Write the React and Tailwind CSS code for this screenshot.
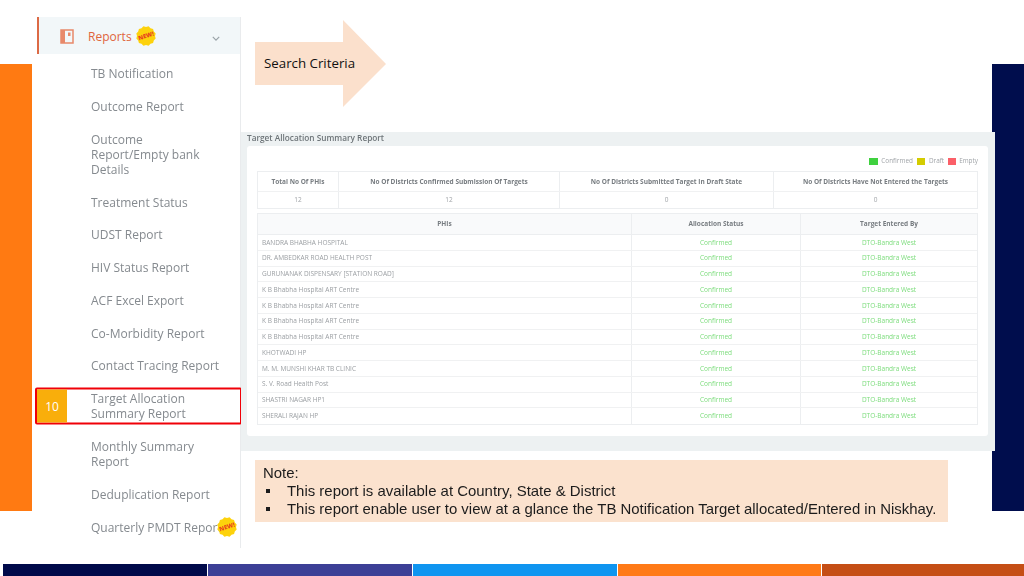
const sideFont = { fontFamily: '"Open Sans", sans-serif' };

function NewBadge({ className }) {
  const pts = [];
  for (let i = 0; i < 24; i++) {
    const r = i % 2 ? 10 : 9;
    const a = (i * Math.PI) / 12;
    pts.push(`${10 + r * Math.cos(a)},${10 + r * Math.sin(a)}`);
  }
  return (
    <span className={`absolute w-[20px] h-[20px] ${className}`}>
      <svg viewBox="0 0 20 20" className="absolute inset-0 w-full h-full">
        <polygon points={pts.join(" ")} fill="#fdd20c" />
      </svg>
      <span className="absolute inset-0 flex items-center justify-center text-[6px] font-extrabold text-[#e8451e] -rotate-[18deg] leading-none">
        NEW!
      </span>
    </span>
  );
}

const items = [
  ["TB Notification"],
  ["Outcome Report"],
  ["Outcome", "Report/Empty bank", "Details"],
  ["Treatment Status"],
  ["UDST Report"],
  ["HIV Status Report"],
  ["ACF Excel Export"],
  ["Co-Morbidity Report"],
  ["Contact Tracing Report"],
];

const rows = [
  "BANDRA BHABHA HOSPITAL",
  "DR. AMBEDKAR ROAD HEALTH POST",
  "GURUNANAK DISPENSARY [STATION ROAD]",
  "K B Bhabha Hospital ART Centre",
  "K B Bhabha Hospital ART Centre",
  "K B Bhabha Hospital ART Centre",
  "K B Bhabha Hospital ART Centre",
  "KHOTWADI HP",
  "M. M. MUNSHI KHAR TB CLINIC",
  "S. V. Road Health Post",
  "SHASTRI NAGAR HP1",
  "SHERALI RAJAN HP",
];

function Item({ lines, children }) {
  return (
    <div className="relative pl-[54px] py-[8.9px] text-[12px] leading-[15px] text-[#858a8f] whitespace-nowrap">
      {lines.map((l) => (
        <div key={l}>{l}</div>
      ))}
      {children}
    </div>
  );
}

function Sidebar() {
  return (
    <div className="w-[204px] h-[531px] mt-[17px] ml-[5px] shrink-0 border-r border-[#e9ebed] blur-[0.35px]" style={sideFont}>
      <div className="h-[37px] flex items-center bg-[#f2f7f9] border-l-2 border-[#dc6a45] pl-[21px] relative">
        <svg viewBox="0 0 14 15" className="w-[14px] h-[15px] shrink-0 mt-[1px]">
          <path d="M1 1h12v13H1z" fill="none" stroke="#e8896a" strokeWidth="1.5" />
          <path d="M1 1h4v13H1z" fill="#e8896a" />
          <path d="M8 3.5h2.5v3.5H8z" fill="#e8896a" />
        </svg>
        <span className="ml-[14px] mt-[3px] text-[12px] text-[#e0653c]">Reports</span>
        <NewBadge className="left-[97px] top-[9px]" />
        <svg viewBox="0 0 10 6" className="absolute left-[173px] top-[19px] w-[8px] h-[5px]">
          <path d="M1 1l4 4 4-4" fill="none" stroke="#9aa3a8" strokeWidth="1.5" />
        </svg>
      </div>
      <div className="mt-[3.3px]">
        {items.map((t) => (
          <Item key={t[0] + t.length} lines={t} />
        ))}
        <Item lines={["Target Allocation", "Summary Report"]}>
          <div className="absolute -left-[2px] top-1/2 -translate-y-1/2 w-[207px] h-[37px] border-[2.5px] border-[#f00008] rounded-[2px]">
            <div className="w-[30px] h-full bg-[#f9ae0b] text-white text-[12px] flex items-center justify-center">10</div>
          </div>
        </Item>
        <Item lines={["Monthly Summary", "Report"]} />
        <Item lines={["Deduplication Report"]} />
        <Item lines={["Quarterly PMDT Report"]}>
          <NewBadge className="left-[180px] top-[6px]" />
        </Item>
      </div>
    </div>
  );
}

function Arrow() {
  return (
    <div className="relative ml-[14px] mt-[20px] w-[131px] h-[87px] flex items-center pl-[9px]">
      <svg viewBox="0 0 131 87" className="absolute inset-0 w-full h-full">
        <polygon points="0,22 88,22 88,0 131,44 88,87 88,65 0,65" fill="#fbe0cc" />
      </svg>
      <span className="relative text-[13.3px] text-[#111] whitespace-nowrap" style={sideFont}>Search Criteria</span>
    </div>
  );
}

function Report() {
  const cell = "border-r border-[#eceef0] flex items-center justify-center";
  return (
    <div className="relative z-10 mt-[25px] w-[754px] h-[319px] bg-[#edf1f2] pl-[6px] pr-[7px] pb-[15px] flex flex-col blur-[0.7px] text-[#777]" style={sideFont}>
      <div className="h-[14px] shrink-0 text-[8.25px] font-semibold leading-[11px] text-[#6d7478] whitespace-nowrap">Target Allocation Summary Report</div>
      <div className="flex-1 bg-white rounded-[3px] px-[10px] pt-[8px] flex flex-col">
        <div className="h-[14px] mb-[3px] flex items-center justify-end text-[6.4px] text-[#a0a4a8] shrink-0">
          <span className="w-[9px] h-[7px] bg-[#3fd13f] mr-[3px]" /><span className="mr-[4px]">Confirmed</span>
          <span className="w-[8px] h-[7px] bg-[#d4cc00] mr-[4px]" /><span className="mr-[4px]">Draft</span>
          <span className="w-[8px] h-[7px] bg-[#fb5f68] mr-[3px]" /><span>Empty</span>
        </div>
        <div className="shrink-0 border border-[#eceef0] text-[6.5px]">
          <div className="grid grid-cols-[81px_221px_214px_1fr] h-[20px] font-bold text-[#777c80] border-b border-[#f0f1f2]">
            <div className={cell}>Total No Of PHIs</div>
            <div className={cell}>No Of Districts Confirmed Submission Of Targets</div>
            <div className={cell}>No Of Districts Submitted Target In Draft State</div>
            <div className="flex items-center justify-center">No Of Districts Have Not Entered the Targets</div>
          </div>
          <div className="grid grid-cols-[81px_221px_214px_1fr] h-[16px] text-[#a0a4a8]">
            <div className={cell}>12</div>
            <div className={cell}>12</div>
            <div className={cell}>0</div>
            <div className="flex items-center justify-center">0</div>
          </div>
        </div>
        <div className="mt-[4px] shrink-0 border border-[#eceef0] text-[6.5px]">
          <div className="grid grid-cols-[374px_169px_1fr] h-[21px] bg-[#f9fafb] font-bold text-[#777c80] border-b border-[#eceef0]">
            <div className={cell}>PHIs</div>
            <div className={cell}>Allocation Status</div>
            <div className="flex items-center justify-center">Target Entered By</div>
          </div>
          {rows.map((r, i) => (
            <div key={i} className="grid grid-cols-[374px_169px_1fr] h-[15.75px] border-b border-[#f0f1f2] last:border-b-0">
              <div className="border-r border-[#eceef0] flex items-center pl-[4px] text-[#9a9ea2]">{r}</div>
              <div className={`${cell} text-[#7bdc7b]`}>Confirmed</div>
              <div className="flex items-center justify-center text-[#7bdc7b]">DTO-Bandra West</div>
            </div>
          ))}
        </div>
      </div>
    </div>
  );
}

function Note() {
  return (
    <div className="mt-[9px] ml-[14px] w-[693px] h-[62px] bg-[#fbe2ce] pl-[8px] pt-[4px] text-[14.95px] leading-[18px] text-[#1c1c1c] blur-[0.25px]" style={{ fontFamily: '"Liberation Sans", Arial, sans-serif' }}>
      <div>Note:</div>
      {[
        "This report is available at Country, State & District",
        "This report enable user to view at a glance the TB Notification Target allocated/Entered in Niskhay.",
      ].map((t) => (
        <div key={t} className="flex items-center whitespace-nowrap">
          <span className="w-[4px] h-[4px] bg-[#1c1c1c] ml-[3px] mr-[17px] shrink-0" />
          <span>{t}</span>
        </div>
      ))}
    </div>
  );
}

export default function App() {
  return (
    <div className="w-[1024px] h-[576px] bg-white flex flex-col overflow-hidden">
      <div className="flex h-[564px] shrink-0">
        <div className="w-[32px] h-[447px] mt-[64px] bg-[#ff7a12] shrink-0" />
        <Sidebar />
        <div className="w-[751px] shrink-0 flex flex-col">
          <Arrow />
          <Report />
          <Note />
        </div>
        <div className="w-[32px] h-[447px] mt-[64px] bg-[#000d4d] shrink-0" />
      </div>
      <div className="flex-1 flex gap-px pl-[3px]">
        <div className="w-[204px] bg-[#000a4a]" />
        <div className="w-[204px] bg-[#3c3f96]" />
        <div className="w-[204px] bg-[#0f95f0]" />
        <div className="w-[203px] bg-[#ff7a17]" />
        <div className="flex-1 bg-[#c54e15]" />
      </div>
    </div>
  );
}
